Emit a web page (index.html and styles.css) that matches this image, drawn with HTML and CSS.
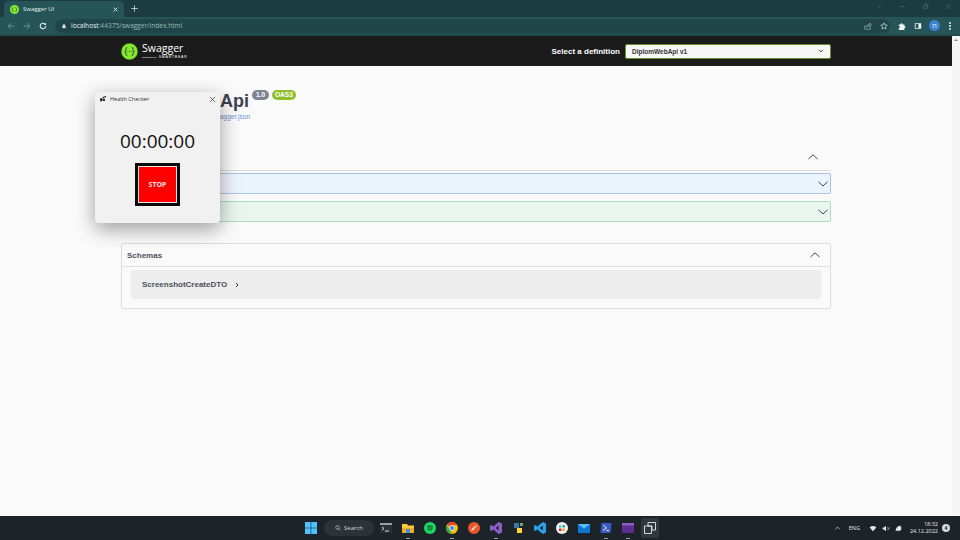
FILE: index.html
```html
<!DOCTYPE html>
<html lang="en">
<head>
    <meta charset="UTF-8">
    <meta name="viewport" content="width=device-width, initial-scale=1.0">
    <title>Swagger UI</title>
    <link rel="stylesheet" href="styles.css">
</head>
<body>
    <div class="tabstrip">
        <div class="tab">
            <svg class="favicon" viewBox="0 0 10 10"><circle cx="5" cy="5" r="5" fill="#85ea2d"/><path d="M3.800 2.600c-1 0-.7 1.200-.9 1.900-.1.400-.5.500-.7.500.2 0 .6.100.7.500.2.700-.1 1.900.9 1.900M6.200 2.600c1 0 .7 1.200.9 1.900.1.400.5.500.7.500-.2 0-.6.100-.7.500-.2.700.1 1.900-.9 1.900" fill="none" stroke="#173647" stroke-width=".7"/></svg>
            <span class="tab-title">Swagger UI</span>
            <svg class="tab-close" viewBox="0 0 8 8"><path d="M1 1l6 6M7 1L1 7" stroke="#e4eeee" stroke-width="1.400"/></svg>
        </div>
        <svg class="new-tab" viewBox="0 0 10 10"><path d="M5 .5v9M.5 5h9" stroke="#c8d8d8" stroke-width="1.200"/></svg>
        <div class="win-controls">
            <svg viewBox="0 0 10 10"><path d="M2.500 4l2.500 2.500L7.500 4" fill="none" stroke="#456a6e" stroke-width="1"/></svg>
            <svg viewBox="0 0 10 10"><path d="M1.500 5h7" stroke="#456a6e" stroke-width="1"/></svg>
            <svg viewBox="0 0 10 10"><path d="M2.500 3h4.500v5h-4.500zM4 3V1.500h4.500V6.500H7" fill="none" stroke="#456a6e" stroke-width="1"/></svg>
            <svg viewBox="0 0 10 10"><path d="M1.500 1.500l7 7M8.500 1.500l-7 7" stroke="#456a6e" stroke-width="1"/></svg>
        </div>
    </div>
    <div class="toolbar">
        <svg class="nav-icon" viewBox="0 0 10 10"><path d="M9 5H1.500M5 1.500L1.500 5 5 8.500" fill="none" stroke="#6f9699" stroke-width="1.200"/></svg>
        <svg class="nav-icon" viewBox="0 0 10 10"><path d="M1 5h7.500M5 1.500L8.500 5 5 8.500" fill="none" stroke="#6f9699" stroke-width="1.200"/></svg>
        <svg class="nav-icon" viewBox="0 0 10 10"><path d="M8.500 5a3.500 3.500 0 1 1-1-2.500" fill="none" stroke="#e6f0f0" stroke-width="1.300"/><path d="M8.800 .8v3h-3z" fill="#e6f0f0"/></svg>
        <div class="omnibox">
            <svg class="lock" viewBox="0 0 8 10"><path d="M1 4.500h6V9H1zM2.300 4.500V3a1.700 1.700 0 0 1 3.400 0v1.500" fill="#d8e4e4" stroke="#d8e4e4" stroke-width=".6" fill-rule="evenodd"/></svg>
            <span class="url"><b>localhost</b>:44375/swagger/index.html</span>
            <svg class="omni-icon share" viewBox="0 0 10 10"><path d="M1 4v5h7V6.500M3 6.500C3 4 5 3 7 3V1.200L9.500 3.800 7 6.200V4.500C5.500 4.500 4 5 3 6.500z" fill="none" stroke="#9db8ba" stroke-width=".8"/></svg>
            <svg class="omni-icon" viewBox="0 0 10 10"><path d="M5 1l1.200 2.700 2.900.3-2.200 1.900.7 2.900L5 7.300 2.400 8.800l.7-2.900L.9 4l2.900-.3z" fill="none" stroke="#c8dada" stroke-width=".9"/></svg>
        </div>
        <svg class="ext-icon" viewBox="0 0 10 10"><path d="M1 3h2.200a1.300 1.300 0 0 1 2.600 0H8v2a1.300 1.300 0 0 1 0 2.600V10H1V7.500a1.300 1.300 0 0 0 0-2.600z" fill="#eef4f4"/></svg>
        <svg class="ext-icon" viewBox="0 0 10 10"><path d="M1 1.500h8v7H1zM2 2.500v5h3.500v-5z" fill="#eef4f4" fill-rule="evenodd"/></svg>
        <span class="avatar">П</span>
        <span class="dots"><i></i><i></i><i></i></span>
    </div>

    <div class="viewport">
        <div class="page">
            <header class="topbar">
                <div class="topbar-inner">
                    <div class="logo">
                        <svg class="logo-mark" viewBox="0 0 20 20"><circle cx="10" cy="10" r="9.500" fill="#85ea2d" stroke="#5da81f" stroke-width=".6"/><path d="M7.300 5.200c-2 0-1.200 2.600-1.800 3.900-.2.500-.7.800-1.200.9.500.1 1 .4 1.200.9.600 1.300-.2 3.900 1.800 3.900M12.700 5.200c2 0 1.200 2.600 1.800 3.900.2.500.7.800 1.200.9-.5.100-1 .4-1.200.9-.6 1.300.2 3.900-1.800 3.900" fill="none" stroke="#173647" stroke-width="1.100"/><path d="M7.700 10h.8M9.600 10h.8M11.500 10h.8" stroke="#173647" stroke-width="1.100"/></svg>
                        <div class="logo-text">
                            <span class="logo-name">Swagger</span>
                            <span class="logo-sub"><small>Supported by</small> SMARTBEAR</span>
                        </div>
                    </div>
                    <div class="definition">
                        <span class="definition-label">Select a definition</span>
                        <div class="definition-select">
                            <span>DiplomWebApi v1</span>
                            <svg class="select-arrow" viewBox="0 0 10 6"><path d="M1.500 1L5 4.500 8.500 1" fill="none" stroke="#333" stroke-width="1.500"/></svg>
                        </div>
                    </div>
                </div>
            </header>

            <main class="content">
                <div class="info">
                    <div class="title-row">
                        <h2 class="title">Api</h2>
                        <span class="badge badge-version">1.0</span>
                        <span class="badge badge-oas">OAS3</span>
                    </div>
                    <a class="spec-link">agger.json</a>
                </div>

                <div class="tag-header">
                    <svg class="chevron" viewBox="0 0 12 8"><path d="M1.500 6L6 1.800 10.500 6" fill="none" stroke="#444" stroke-width="1"/></svg>
                </div>
                <div class="opblock opblock-post">
                    <svg class="chevron" viewBox="0 0 12 8"><path d="M1.500 1.800L6 6l4.500-4.200" fill="none" stroke="#444" stroke-width="1"/></svg>
                </div>
                <div class="opblock opblock-get">
                    <svg class="chevron" viewBox="0 0 12 8"><path d="M1.500 1.800L6 6l4.500-4.200" fill="none" stroke="#444" stroke-width="1"/></svg>
                </div>

                <section class="schemas">
                    <div class="schemas-header">
                        <span>Schemas</span>
                        <svg class="chevron" viewBox="0 0 12 8"><path d="M1.500 6L6 1.800 10.500 6" fill="none" stroke="#444" stroke-width="1"/></svg>
                    </div>
                    <div class="model">
                        <span>ScreenshotCreateDTO</span>
                        <svg class="model-arrow" viewBox="0 0 6 8"><path d="M2 2L4 4 2 6" fill="none" stroke="#333" stroke-width="1"/></svg>
                    </div>
                </section>
            </main>
        </div>
        <div class="scrollbar"><svg viewBox="0 0 8 6"><path d="M2 4l2-2 2 2z" fill="#8a8a8a"/></svg></div>

        <div class="checker">
            <div class="checker-title">
                <svg class="checker-icon" viewBox="0 0 8 8"><path d="M0 3h3v4H0zM3.600 1h2v2h-2zM3.600 3.600h3v3h-3zM6 0h2v2H6z" fill="#2a2a2a"/></svg>
                <span>Health Checker</span>
                <svg class="checker-close" viewBox="0 0 8 8"><path d="M1 1l6 6M7 1L1 7" stroke="#333" stroke-width=".8"/></svg>
            </div>
            <div class="checker-time">00:00:00</div>
            <div class="stop-btn">STOP</div>
        </div>
    </div>

    <footer class="taskbar">
        <div class="task-icons">
            <svg class="task-icon" viewBox="0 0 12 12"><path d="M0 0h5.700v5.700H0zM6.300 0H12v5.700H6.300zM0 6.300h5.700V12H0zM6.300 6.300H12V12H6.300z" fill="#4cc2ff"/></svg>
            <div class="search">
                <svg viewBox="0 0 10 10"><circle cx="4.200" cy="4.200" r="3" fill="none" stroke="#e8e8e8"/><path d="M6.400 6.400L9 9" stroke="#e8e8e8"/></svg>
                <span>Search</span>
            </div>
            <svg class="task-icon" viewBox="0 0 12 12"><path d="M0 1h12v10H0z" fill="#2b3036"/><path d="M0 1h12v2H0z" fill="#9aa0a6"/><path d="M2 5l2 1.500L2 8M5 9h4" fill="none" stroke="#fff" stroke-width=".8"/></svg>
            <span class="task-app"><svg class="task-icon" viewBox="0 0 12 12"><path d="M0 2h5l1 1.500h6V11H0z" fill="#ffc83d"/><path d="M0 6h12v5H0z" fill="#f5a623"/><path d="M4 7h4v4H4z" fill="#3a96dd"/></svg></span>
            <svg class="task-icon" viewBox="0 0 12 12"><circle cx="6" cy="6" r="6" fill="#1ed760"/><path d="M3 4.300c2-.6 4.200-.4 6 .6M3.400 6.100c1.700-.5 3.500-.3 5 .5M3.700 7.800c1.400-.4 2.800-.2 4 .4" fill="none" stroke="#12301e" stroke-width=".9"/></svg>
            <span class="task-app"><svg class="task-icon" viewBox="0 0 12 12"><circle cx="6" cy="6" r="6" fill="#fbbc04"/><path d="M6 0a6 6 0 0 1 5.200 3H6a3 3 0 0 0-2.800 1.800L1.300 2.200A6 6 0 0 1 6 0z" fill="#ea4335"/><path d="M.9 2.900L3.500 7.600 6 12a6 6 0 0 1-5.100-9.100z" fill="#34a853"/><circle cx="6" cy="6" r="2.500" fill="#4285f4" stroke="#fff" stroke-width=".7"/></svg></span>
            <svg class="task-icon" viewBox="0 0 12 12"><circle cx="6" cy="6" r="6" fill="#e8562a"/><path d="M3.500 8.500l5-5M4 6l2 2" stroke="#fbd7c8" stroke-width="1.100"/></svg>
            <span class="task-app"><svg class="task-icon" viewBox="0 0 12 12"><path d="M8.500 0L12 1.500v9L8.500 12 3.500 7.500 1.200 9 0 8.300V3.700L1.200 3l2.300 1.500zM8.500 3.500L5.700 6l2.800 2.500z" fill="#8661c5" fill-rule="evenodd"/></svg></span>
            <svg class="task-icon" viewBox="0 0 12 12"><path d="M2 1h5v5H2z" fill="#3776ab"/><path d="M5 6h5v5H5z" fill="#ffd43b"/><path d="M8 1h3v3H8z" fill="#6ab04c"/></svg>
            <svg class="task-icon" viewBox="0 0 12 12"><path d="M8.700 0L12 1.400v9.200L8.700 12 3.400 7.400 1.200 9 0 8.300V3.700L1.200 3l2.200 1.600zM8.700 3.400L5.800 6l2.900 2.600z" fill="#2b9fe8" fill-rule="evenodd"/></svg>
            <svg class="task-icon" viewBox="0 0 12 12"><circle cx="6" cy="6" r="6" fill="#f4f1ec"/><path d="M3 3.500h2.500v2H3z" fill="#36c5f0"/><path d="M6.500 3h2.500v2.500H6.500z" fill="#2eb67d"/><path d="M3 6.500h2.500V9H3z" fill="#e01e5a"/><path d="M6.500 6.500H9V9H6.500z" fill="#ecb22e"/></svg>
            <svg class="task-icon" viewBox="0 0 12 12"><path d="M0 2h12v9H0z" fill="#0f78d4"/><path d="M0 2h12L6 6.500z" fill="#58c0f5"/></svg>
            <span class="task-app"><svg class="task-icon" viewBox="0 0 12 12"><path d="M1.500 1h10l-1 10H.5z" fill="#3a5bc7"/><path d="M3.500 3.500L6.500 6l-3.500 2.500M6.500 8.500h2.500" fill="none" stroke="#fff" stroke-width=".9"/></svg></span>
            <span class="task-app"><svg class="task-icon" viewBox="0 0 12 12"><path d="M0 1h12v10H0z" fill="#5c2d91"/><path d="M0 1h12v2.500H0z" fill="#8a5cc4"/></svg></span>
            <div class="task-active">
                <svg class="task-icon" viewBox="0 0 12 12"><path d="M.5 4h7v7.500h-7zM4 .5h7.500v7.500H8V4H4z" fill="none" stroke="#e6e6e6" stroke-width=".9"/></svg>
            </div>
        </div>
        <div class="tray">
            <svg class="tray-caret" viewBox="0 0 10 6"><path d="M1.500 5L5 1.500 8.500 5" fill="none" stroke="#e6e6e6" stroke-width="1"/></svg>
            <span class="lang">ENG</span>
            <svg class="tray-icon" viewBox="0 0 12 10"><path d="M1 3.500a7 7 0 0 1 10 0L6 9z" fill="#e6e6e6"/></svg>
            <svg class="tray-icon" viewBox="0 0 12 10"><path d="M1 3.500h2L6 1v8L3 6.500H1z" fill="#e6e6e6"/><path d="M8 3l3 4M11 3L8 7" stroke="#e6e6e6" stroke-width=".8"/></svg>
            <svg class="tray-icon" viewBox="0 0 12 10"><path d="M1 8.500C1 3 6 1 8 1c2 2 2 5 0 7.500z" fill="#e6e6e6"/></svg>
            <div class="clock"><span>18:32</span><span>24.12.2022</span></div>
            <span class="notify">4</span>
        </div>
    </footer>
</body>
</html>
```

FILE: styles.css
```css
* {
    box-sizing: border-box;
}
html, body {
    height: 100%;
}
body {
    margin: 0;
    width: 960px;
    height: 540px;
    overflow: hidden;
    display: flex;
    flex-direction: column;
    font-family: "Liberation Sans", Arial, sans-serif;
    background: #fafafa;
}
svg {
    display: block;
    flex: none;
}

/* browser chrome */
.tabstrip {
    height: 17px;
    background: #1c3c41;
    display: flex;
    align-items: flex-end;
    flex: none;
}
.tab {
    width: 120px;
    height: 16px;
    margin-left: 4px;
    padding: 0 6px;
    background: #265559;
    border-radius: 5px 5px 0 0;
    display: flex;
    align-items: center;
    gap: 4px;
}
.favicon {
    width: 9px;
    height: 9px;
}
.tab-title {
    flex: 1;
    color: #e0ebeb;
    font-family: "Open Sans", sans-serif;
    font-size: 6px;
}
.tab-close {
    width: 5px;
    height: 5px;
}
.new-tab {
    width: 7px;
    height: 7px;
    margin: 0 0 5px 7px;
}
.win-controls {
    margin-left: auto;
    align-self: flex-start;
    display: flex;
    gap: 16px;
    padding: 3px 8px 0 0;
}
.win-controls svg {
    width: 7px;
    height: 7px;
}
.toolbar {
    height: 19px;
    background: #265559;
    border-bottom: 2px solid #1f4a4e;
    display: flex;
    align-items: center;
    padding-left: 7px;
    flex: none;
}
.nav-icon {
    width: 8px;
    height: 8px;
    margin-right: 8px;
}
.omnibox {
    width: 835px;
    height: 14px;
    padding: 0 2px 0 7px;
    background: #1f4549;
    border-radius: 7px;
    display: flex;
    align-items: center;
    flex: none;
}
.lock {
    width: 4px;
    height: 6px;
    margin-right: 5px;
}
.url {
    flex: 1;
    font-family: "Open Sans", sans-serif;
    font-size: 6.600px;
    color: #9db8ba;
}
.url b {
    color: #e4eeee;
    font-weight: 400;
}
.omni-icon {
    width: 8px;
    height: 8px;
}
.omni-icon.share {
    margin-right: 8px;
}
.ext-icon {
    width: 8px;
    height: 8px;
    margin-left: 8px;
}
.avatar {
    width: 11px;
    height: 11px;
    margin-left: 7px;
    border-radius: 50%;
    background: #3a82d0;
    color: #eef4fb;
    font-size: 6px;
    display: flex;
    align-items: center;
    justify-content: center;
    flex: none;
}
.dots {
    margin-left: 9px;
    display: flex;
    flex-direction: column;
    gap: 1px;
}
.dots i {
    width: 2px;
    height: 2px;
    border-radius: 50%;
    background: #eef4f4;
}

/* page */
.viewport {
    flex: 1;
    min-height: 0;
    position: relative;
    display: flex;
}
.page {
    flex: 1;
    min-width: 0;
}
.scrollbar {
    width: 8px;
    background: #f5f5f5;
    padding-top: 1px;
}
.scrollbar svg {
    width: 8px;
    height: 6px;
}
.topbar {
    height: 30px;
    background: #1b1b1b;
}
.topbar-inner {
    width: 710px;
    height: 100%;
    margin-left: 121px;
    display: flex;
    align-items: center;
    justify-content: space-between;
}
.logo {
    display: flex;
    align-items: center;
    gap: 4px;
}
.logo-mark {
    width: 17px;
    height: 17px;
}
.logo-text {
    display: flex;
    flex-direction: column;
    color: #fff;
}
.logo-name {
    font-family: "Open Sans", sans-serif;
    font-size: 10.500px;
    line-height: 12px;
}
.logo-sub {
    font-size: 3.500px;
    line-height: 4px;
    letter-spacing: .8px;
    margin-top: 1px;
}
.logo-sub small {
    font-size: 2.500px;
    letter-spacing: 0;
}
.definition {
    display: flex;
    align-items: center;
    gap: 5px;
}
.definition-label {
    color: #fff;
    font-size: 8px;
    font-weight: 700;
}
.definition-select {
    width: 206px;
    height: 15px;
    padding: 0 6px;
    background: #f7f7f7;
    border: 1px solid #6c8f2c;
    border-radius: 2px;
    display: flex;
    align-items: center;
    justify-content: space-between;
    color: #333;
    font-size: 6.500px;
    font-weight: 700;
}
.select-arrow {
    width: 6px;
    height: 4px;
}
.content {
    width: 710px;
    margin-left: 121px;
}
.info {
    padding: 24px 0 0 99px;
    height: 68px;
}
.title-row {
    display: flex;
    align-items: flex-start;
}
.title {
    margin: 0;
    color: #3b4151;
    font-size: 18px;
    line-height: 23px;
    font-weight: 700;
}
.badge {
    height: 10px;
    padding: 0 3px;
    border-radius: 5px;
    color: #fff;
    font-size: 6.500px;
    line-height: 10px;
    font-weight: 700;
    margin-left: 3px;
}
.badge-version {
    padding: 0 4px;
    background: #7d8492;
}
.badge-oas {
    background: #8fbf2c;
}
.spec-link {
    display: block;
    color: #6f8fd0;
    font-size: 6.500px;
    line-height: 8px;
}
.tag-header {
    height: 37px;
    border-bottom: 1px solid #d8dae0;
    display: flex;
    align-items: flex-end;
    justify-content: flex-end;
    padding: 0 12px 9px 0;
}
.chevron {
    width: 12px;
    height: 8px;
}
.opblock {
    height: 21px;
    margin-top: 2px;
    border-radius: 2px;
    border: 1px solid;
    display: flex;
    align-items: center;
    justify-content: flex-end;
    padding-right: 1px;
}
.opblock-post {
    background: #ebf3fb;
    border-color: #a9c3e8;
}
.opblock-get {
    margin-top: 7px;
    background: #e9f6f0;
    border-color: #b0d8c6;
}
.schemas {
    height: 66px;
    margin-top: 21px;
    border: 1px solid #dcdde0;
    border-radius: 2px;
}
.schemas-header {
    height: 23px;
    padding: 0 9px 0 5px;
    border-bottom: 1px solid #dcdde0;
    display: flex;
    align-items: center;
    justify-content: space-between;
    color: #4c505c;
    font-size: 8px;
    font-weight: 700;
}
.model {
    height: 29px;
    margin: 3px 9px 0;
    padding-left: 11px;
    background: #ededed;
    border-radius: 2px;
    display: flex;
    align-items: center;
    gap: 7px;
    color: #4c505c;
    font-size: 8px;
    font-weight: 700;
}
.model-arrow {
    width: 6px;
    height: 8px;
}

/* floating window */
.checker {
    position: absolute;
    left: 95px;
    top: 56px;
    width: 125px;
    height: 131px;
    background: #f1f1f1;
    border-radius: 4px;
    box-shadow: 0 6px 20px rgba(0, 0, 0, .38);
    display: flex;
    flex-direction: column;
    align-items: center;
}
.checker-title {
    align-self: stretch;
    height: 14px;
    padding: 0 4px 0 5px;
    display: flex;
    align-items: center;
    gap: 4px;
    color: #333;
    font-family: "Open Sans", sans-serif;
    font-size: 5.500px;
}
.checker-icon {
    width: 6px;
    height: 6px;
}
.checker-close {
    width: 7px;
    height: 7px;
    margin-left: auto;
}
.checker-time {
    margin-top: 23px;
    color: #111;
    font-family: "Open Sans", sans-serif;
    font-size: 19px;
    line-height: 24px;
}
.stop-btn {
    width: 45px;
    height: 43px;
    margin-top: 10px;
    background: #f00;
    border: 3px solid #0a0a0a;
    box-shadow: inset 0 0 0 1px #e8e4ee;
    display: flex;
    align-items: center;
    justify-content: center;
    color: #f8e0e0;
    font-family: "Open Sans", sans-serif;
    font-size: 7px;
    font-weight: 700;
}

/* windows taskbar */
.taskbar {
    height: 24px;
    background: #1c2329;
    display: flex;
    align-items: center;
    position: relative;
    flex: none;
}
.task-icons {
    margin-left: 305px;
    display: flex;
    align-items: center;
    gap: 10px;
}
.task-icon {
    width: 12px;
    height: 12px;
}
.task-app {
    position: relative;
}
.task-app::after {
    content: "";
    position: absolute;
    left: 4px;
    bottom: -5px;
    width: 4px;
    height: 1px;
    background: #9aa3aa;
}
.search {
    width: 50px;
    height: 16px;
    margin: 0 -4px 0 -3px;
    padding-left: 11px;
    border-radius: 8px;
    background: #2c3238;
    display: flex;
    align-items: center;
    gap: 3px;
    color: #d8d8d8;
    font-family: "Open Sans", sans-serif;
    font-size: 6px;
}
.search svg {
    width: 6px;
    height: 6px;
}
.task-active {
    width: 18px;
    height: 20px;
    margin: 0 -3px;
    background: #30373d;
    border-radius: 2px;
    display: flex;
    align-items: center;
    justify-content: center;
}
.tray {
    margin-left: auto;
    display: flex;
    align-items: center;
    color: #e6e6e6;
    font-family: "Open Sans", sans-serif;
    font-size: 5.500px;
    padding-right: 10px;
}
.tray-caret {
    width: 7px;
    height: 4px;
    margin-right: 8px;
}
.lang {
    margin-right: 9px;
}
.tray-icon {
    width: 8px;
    height: 7px;
    margin-right: 5px;
}
.clock {
    margin: 0 4px 0 2px;
    display: flex;
    flex-direction: column;
    align-items: flex-end;
    line-height: 7px;
}
.notify {
    width: 8px;
    height: 8px;
    border-radius: 50%;
    background: #d8d8d8;
    color: #1c2329;
    font-size: 5px;
    font-weight: 700;
    text-align: center;
    line-height: 8px;
}
```
